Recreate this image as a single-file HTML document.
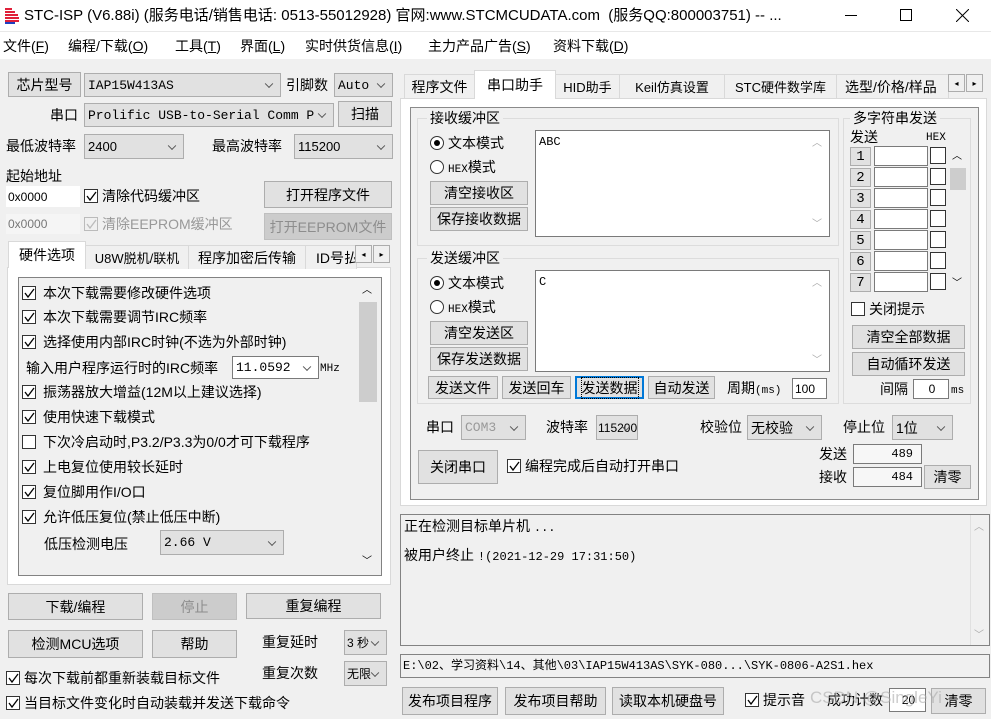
<!DOCTYPE html>
<html><head><meta charset="utf-8"><style>
*{margin:0;padding:0;box-sizing:border-box}
body{width:991px;height:719px;overflow:hidden;background:#f0f0f0;position:relative;font-family:"Liberation Sans","Noto Sans CJK SC",sans-serif;font-size:14px;color:#000}
div,span{position:absolute}
.t{white-space:nowrap;line-height:16px;font-size:14px}
.m{font-family:"Liberation Mono","Noto Sans CJK SC",monospace;font-size:12px}
.btn{background:#e1e1e1;border:1px solid #adadad;display:flex;align-items:center;justify-content:center;white-space:nowrap;font-size:14px}
.dis{background:#cccccc;border-color:#bfbfbf;color:#8d8d8d}
.cmb{background:#e1e1e1;border:1px solid #adadad;white-space:nowrap;padding-left:3px;display:flex;align-items:center;font-size:13px}
.cmb:after{content:"";position:absolute;right:8px;top:50%;width:5px;height:5px;border-right:1px solid #555;border-bottom:1px solid #555;transform:translateY(-70%) rotate(45deg)}
.wc{background:#fff;border-color:#7a7a7a}
.ed{background:#fff;border:1px solid #7a7a7a;white-space:nowrap;font-size:12px;padding-left:2px;display:flex;align-items:center}
.ck{width:14px;height:14px;border:1px solid #333;background:#fff}
.ck svg{position:absolute;left:0;top:0}
.rd{width:14px;height:14px;border:1px solid #333;border-radius:50%;background:#fff}
.grp{border:1px solid #dcdcdc}
.lbl{background:#f0f0f0;padding:0 3px;font-size:14px;line-height:16px;white-space:nowrap}
.tab{height:24px;border:1px solid #d9d9d9;border-bottom:none;background:#f0f0f0;font-size:14px;display:flex;align-items:center;justify-content:center;white-space:nowrap}
.arr{width:17px;height:18px;border:1px solid #adadad;background:#f0f0f0;font-size:8px;display:flex;align-items:center;justify-content:center}
</style></head><body>
<!-- title -->
<div style="left:0;top:0;width:991px;height:31px;background:#fff"></div>
<div style="left:0;top:31px;width:991px;height:28px;background:#fff;border-top:1px solid #e8e8e8"></div>
<svg style="position:absolute;left:3px;top:7px" width="20" height="18"><path d="M2 2h7M2 5h10M2 8h13M2 11h14M2 14h14" stroke="#e0203a" stroke-width="2"/><path d="M2 16h10" stroke="#2040c0" stroke-width="2"/></svg>
<div class="t" style="left:24px;top:7px;font-size:15px;line-height:18px">STC-ISP (V6.88i) (服务电话/销售电话: 0513-55012928) 官网:www.STCMCUDATA.com&nbsp; (服务QQ:800003751) -- ...</div>
<div style="left:845px;top:15px;width:12px;height:1px;background:#000"></div>
<div style="left:900px;top:9px;width:12px;height:12px;border:1px solid #000"></div>
<svg style="position:absolute;left:956px;top:9px" width="13" height="13"><path d="M0 0L13 13M13 0L0 13" stroke="#000"/></svg>
<div class="t" style="left:3px;top:38px">文件(<u>F</u>)</div>
<div class="t" style="left:68px;top:38px">编程/下载(<u>O</u>)</div>
<div class="t" style="left:175px;top:38px">工具(<u>T</u>)</div>
<div class="t" style="left:240px;top:38px">界面(<u>L</u>)</div>
<div class="t" style="left:305px;top:38px">实时供货信息(<u>I</u>)</div>
<div class="t" style="left:428px;top:38px">主力产品广告(<u>S</u>)</div>
<div class="t" style="left:553px;top:38px">资料下载(<u>D</u>)</div>

<!-- LEFT -->
<div class="btn" style="left:8px;top:72px;width:73px;height:25px">芯片型号</div>
<div class="cmb m" style="left:84px;top:73px;width:197px;height:24px">IAP15W413AS</div>
<div class="t" style="left:286px;top:77px">引脚数</div>
<div class="cmb m" style="left:334px;top:73px;width:59px;height:24px">Auto</div>
<div class="t" style="left:50px;top:107px">串口</div>
<div class="cmb m" style="left:84px;top:103px;width:250px;height:24px">Prolific USB-to-Serial Comm P</div>
<div class="btn" style="left:338px;top:101px;width:54px;height:26px">扫描</div>
<div class="t" style="left:6px;top:138px">最低波特率</div>
<div class="cmb" style="left:84px;top:134px;width:100px;height:25px">2400</div>
<div class="t" style="left:212px;top:138px">最高波特率</div>
<div class="cmb" style="left:294px;top:134px;width:99px;height:25px">115200</div>
<div class="t" style="left:6px;top:168px">起始地址</div>
<div class="ed" style="left:6px;top:186px;width:74px;height:21px;border:none">0x0000</div>
<div class="ck" style="left:84px;top:189px"><svg width="13" height="13"><path d="M2 6l3 4 6-8" fill="none" stroke="#000" stroke-width="1.3"/></svg></div>
<div class="t" style="left:102px;top:188px">清除代码缓冲区</div>
<div class="btn" style="left:264px;top:181px;width:128px;height:27px">打开程序文件</div>
<div class="ed" style="left:6px;top:214px;width:74px;height:20px;border:none;background:#f5f5f5;color:#777">0x0000</div>
<div class="ck" style="left:84px;top:217px;border-color:#bbb;background:#f0f0f0"><svg width="13" height="13"><path d="M2 6l3 4 6-8" fill="none" stroke="#bbb" stroke-width="1.3"/></svg></div>
<div class="t" style="left:102px;top:216px;color:#999">清除EEPROM缓冲区</div>
<div class="btn dis" style="left:264px;top:213px;width:128px;height:27px">打开EEPROM文件</div>
<!-- left tabs -->
<div style="left:7px;top:267px;width:384px;height:318px;background:#fff;border:1px solid #d9d9d9"></div>
<div class="tab" style="left:85px;top:245px;width:104px;font-size:13px">U8W脱机/联机</div>
<div class="tab" style="left:188px;top:245px;width:118px">程序加密后传输</div>
<div class="tab" style="left:305px;top:245px;width:52px;justify-content:flex-start;padding-left:10px;overflow:hidden">ID号払</div>
<div class="arr" style="left:355px;top:245px">◂</div><div class="arr" style="left:373px;top:245px">▸</div>
<div class="tab" style="left:8px;top:241px;width:78px;height:27px;background:#fff">硬件选项</div>
<div style="left:18px;top:277px;width:364px;height:299px;background:#f0f0f0;border:1px solid #828282"></div>
<div style="left:359px;top:302px;width:18px;height:100px;background:#cdcdcd"></div>
<div class="t" style="left:362px;top:283px;font-size:10px">︿</div>
<div class="t" style="left:362px;top:554px;font-size:10px">﹀</div>
<div class="t" style="left:26px;top:360px">输入用户程序运行时的IRC频率</div>
<div class="cmb m wc" style="left:232px;top:356px;width:87px;height:23px">11.0592</div>
<div class="t m" style="left:320px;top:361px;font-size:11px">MHz</div>
<div class="t" style="left:44px;top:536px">低压检测电压</div>
<div class="cmb m" style="left:160px;top:530px;width:124px;height:25px">2.66 V</div>
<!-- left buttons -->
<div class="btn" style="left:8px;top:593px;width:135px;height:27px">下载/编程</div>
<div class="btn dis" style="left:152px;top:593px;width:85px;height:27px">停止</div>
<div class="btn" style="left:246px;top:593px;width:135px;height:26px">重复编程</div>
<div class="btn" style="left:8px;top:630px;width:135px;height:28px">检测MCU选项</div>
<div class="btn" style="left:152px;top:630px;width:85px;height:28px">帮助</div>
<div class="t" style="left:262px;top:634px">重复延时</div>
<div class="cmb" style="left:344px;top:630px;width:43px;height:25px;font-size:12px;padding-left:2px">3 秒</div>
<div class="t" style="left:262px;top:665px">重复次数</div>
<div class="cmb" style="left:344px;top:661px;width:43px;height:25px;font-size:12px;padding-left:2px">无限</div>
<div class="ck" style="left:6px;top:671px"><svg width="13" height="13"><path d="M2 6l3 4 6-8" fill="none" stroke="#000" stroke-width="1.3"/></svg></div>
<div class="t" style="left:24px;top:670px">每次下载前都重新装载目标文件</div>
<div class="ck" style="left:6px;top:696px"><svg width="13" height="13"><path d="M2 6l3 4 6-8" fill="none" stroke="#000" stroke-width="1.3"/></svg></div>
<div class="t" style="left:24px;top:695px">当目标文件变化时自动装载并发送下载命令</div>

<!-- RIGHT tabs -->
<div style="left:400px;top:98px;width:587px;height:408px;background:#fff;border:1px solid #d9d9d9"></div>
<div class="tab" style="left:404px;top:74px;width:71px">程序文件</div>
<div class="tab" style="left:555px;top:74px;width:65px;font-size:13px">HID助手</div>
<div class="tab" style="left:619px;top:74px;width:106px;font-size:13px">Keil仿真设置</div>
<div class="tab" style="left:724px;top:74px;width:113px;font-size:13px">STC硬件数学库</div>
<div class="tab" style="left:836px;top:74px;width:113px;overflow:hidden;justify-content:flex-start;padding-left:8px">选型/价格/样品</div>
<div class="arr" style="left:948px;top:74px">◂</div><div class="arr" style="left:966px;top:74px">▸</div>
<div class="tab" style="left:474px;top:70px;width:82px;height:29px;background:#fff">串口助手</div>
<div style="left:410px;top:107px;width:569px;height:393px;background:#f0f0f0;border:1px solid #8a8a8a"></div>
<!-- receive group -->
<div class="grp" style="left:417px;top:118px;width:422px;height:128px"></div>
<div class="lbl" style="left:427px;top:110px">接收缓冲区</div>
<div class="rd" style="left:430px;top:136px"><div style="left:3px;top:3px;width:6px;height:6px;border-radius:50%;background:#000"></div></div>
<div class="t" style="left:448px;top:135px">文本模式</div>
<div class="rd" style="left:430px;top:160px"></div>
<div class="t" style="left:448px;top:159px"><span class="m" style="position:static;font-size:11px">HEX</span>模式</div>
<div class="btn" style="left:430px;top:181px;width:98px;height:24px">清空接收区</div>
<div class="btn" style="left:430px;top:207px;width:98px;height:24px">保存接收数据</div>
<div style="left:535px;top:130px;width:295px;height:107px;background:#fff;border:1px solid #7a7a7a"></div>
<div class="t m" style="left:539px;top:134px">ABC</div>
<div class="t" style="left:812px;top:136px;font-size:10px;color:#aaa">︿</div>
<div class="t" style="left:812px;top:217px;font-size:10px;color:#aaa">﹀</div>
<!-- send group -->
<div class="grp" style="left:417px;top:258px;width:422px;height:146px"></div>
<div class="lbl" style="left:427px;top:250px">发送缓冲区</div>
<div class="rd" style="left:430px;top:276px"><div style="left:3px;top:3px;width:6px;height:6px;border-radius:50%;background:#000"></div></div>
<div class="t" style="left:448px;top:275px">文本模式</div>
<div class="rd" style="left:430px;top:300px"></div>
<div class="t" style="left:448px;top:299px"><span class="m" style="position:static;font-size:11px">HEX</span>模式</div>
<div class="btn" style="left:430px;top:321px;width:98px;height:24px">清空发送区</div>
<div class="btn" style="left:430px;top:347px;width:98px;height:24px">保存发送数据</div>
<div style="left:535px;top:270px;width:295px;height:102px;background:#fff;border:1px solid #7a7a7a"></div>
<div class="t m" style="left:539px;top:274px">C</div>
<div class="t" style="left:812px;top:276px;font-size:10px;color:#aaa">︿</div>
<div class="t" style="left:812px;top:353px;font-size:10px;color:#aaa">﹀</div>
<div class="btn" style="left:428px;top:376px;width:70px;height:23px">发送文件</div>
<div class="btn" style="left:502px;top:376px;width:69px;height:23px">发送回车</div>
<div class="btn" style="left:575px;top:376px;width:69px;height:23px;border:2px solid #0078d7"><span style="position:static;outline:1px dotted #000">发送数据</span></div>
<div class="btn" style="left:648px;top:376px;width:67px;height:23px">自动发送</div>
<div class="t" style="left:727px;top:380px">周期<span class="m" style="position:static;font-size:11px">(ms)</span></div>
<div class="ed" style="left:792px;top:378px;width:35px;height:21px">100</div>
<!-- multi string -->
<div class="grp" style="left:843px;top:118px;width:128px;height:286px"></div>
<div class="lbl" style="left:850px;top:110px">多字符串发送</div>
<div class="t" style="left:850px;top:129px">发送</div>
<div class="t m" style="left:926px;top:130px;font-size:11px">HEX</div>
<div style="left:950px;top:168px;width:16px;height:22px;background:#cdcdcd"></div>
<div class="t" style="left:952px;top:149px;font-size:10px">︿</div>
<div class="t" style="left:952px;top:276px;font-size:10px">﹀</div>
<div class="ck" style="left:851px;top:302px"></div>
<div class="t" style="left:869px;top:301px">关闭提示</div>
<div class="btn" style="left:852px;top:325px;width:113px;height:24px">清空全部数据</div>
<div class="btn" style="left:852px;top:352px;width:113px;height:24px">自动循环发送</div>
<div class="t" style="left:880px;top:381px">间隔</div>
<div class="ed" style="left:913px;top:379px;width:36px;height:20px;justify-content:center">0</div>
<div class="t m" style="left:951px;top:383px;font-size:11px">ms</div>
<!-- port row -->
<div class="t" style="left:426px;top:419px">串口</div>
<div class="cmb m dis" style="left:461px;top:415px;width:65px;height:25px;color:#999">COM3</div>
<div class="t" style="left:546px;top:419px">波特率</div>
<div class="cmb" style="left:596px;top:415px;width:42px;height:25px;font-size:12px;padding-left:1px">115200</div>
<div class="t" style="left:700px;top:419px">校验位</div>
<div class="cmb" style="left:747px;top:415px;width:75px;height:25px;font-size:14px">无校验</div>
<div class="t" style="left:843px;top:419px">停止位</div>
<div class="cmb" style="left:892px;top:415px;width:61px;height:25px;font-size:14px">1位</div>
<div class="btn" style="left:418px;top:450px;width:80px;height:34px">关闭串口</div>
<div class="ck" style="left:507px;top:459px"><svg width="13" height="13"><path d="M2 6l3 4 6-8" fill="none" stroke="#000" stroke-width="1.3"/></svg></div>
<div class="t" style="left:525px;top:458px">编程完成后自动打开串口</div>
<div class="t" style="left:819px;top:446px">发送</div>
<div class="ed m" style="left:853px;top:444px;width:69px;height:20px;justify-content:flex-end;padding-right:8px;background:#f7f7f7">489</div>
<div class="t" style="left:819px;top:469px">接收</div>
<div class="ed m" style="left:853px;top:467px;width:69px;height:20px;justify-content:flex-end;padding-right:8px;background:#f7f7f7">484</div>
<div class="btn" style="left:924px;top:465px;width:47px;height:24px">清零</div>
<!-- log -->
<div style="left:400px;top:514px;width:590px;height:132px;border:1px solid #828282;background:#f0f0f0"></div>
<div class="t" style="left:404px;top:518px">正在检测目标单片机 <span class="m" style="position:static">...</span></div>
<div class="t" style="left:404px;top:547px">被用户终止 <span class="m" style="position:static">!(2021-12-29 17:31:50)</span></div>
<div style="left:970px;top:515px;width:1px;height:130px;background:#e0e0e0"></div>
<div class="t" style="left:974px;top:520px;font-size:10px;color:#aaa">︿</div>
<div class="t" style="left:974px;top:628px;font-size:10px;color:#aaa">﹀</div>
<div style="left:400px;top:654px;width:590px;height:24px;border:1px solid #828282;background:#f0f0f0"></div>
<div class="t m" style="left:403px;top:658px">E:\02、学习资料\14、其他\03\IAP15W413AS\SYK-080...\SYK-0806-A2S1.hex</div>
<div class="btn" style="left:402px;top:687px;width:96px;height:28px">发布项目程序</div>
<div class="btn" style="left:505px;top:687px;width:101px;height:28px">发布项目帮助</div>
<div class="btn" style="left:612px;top:687px;width:112px;height:28px">读取本机硬盘号</div>
<div class="ck" style="left:745px;top:693px"><svg width="13" height="13"><path d="M2 6l3 4 6-8" fill="none" stroke="#000" stroke-width="1.3"/></svg></div>
<div class="t" style="left:763px;top:692px">提示音</div>
<div class="t" style="left:827px;top:692px">成功计数</div>
<div class="ed" style="left:889px;top:688px;width:37px;height:24px;justify-content:center">20</div>
<div class="btn" style="left:931px;top:688px;width:55px;height:26px">清零</div>
<div class="t" style="left:810px;top:688px;font-size:17px;line-height:20px;color:rgba(170,170,170,.6)">CSDN @SingleYi</div>

<!-- left checkbox list -->
<div class="ck" style="left:22px;top:286px"><svg width="13" height="13"><path d="M2 6l3 4 6-8" fill="none" stroke="#000" stroke-width="1.3"/></svg></div><div class="t" style="left:43px;top:285px">本次下载需要修改硬件选项</div>
<div class="ck" style="left:22px;top:310px"><svg width="13" height="13"><path d="M2 6l3 4 6-8" fill="none" stroke="#000" stroke-width="1.3"/></svg></div><div class="t" style="left:43px;top:309px">本次下载需要调节IRC频率</div>
<div class="ck" style="left:22px;top:335px"><svg width="13" height="13"><path d="M2 6l3 4 6-8" fill="none" stroke="#000" stroke-width="1.3"/></svg></div><div class="t" style="left:43px;top:334px">选择使用内部IRC时钟(不选为外部时钟)</div>
<div class="ck" style="left:22px;top:385px"><svg width="13" height="13"><path d="M2 6l3 4 6-8" fill="none" stroke="#000" stroke-width="1.3"/></svg></div><div class="t" style="left:43px;top:384px">振荡器放大增益(12M以上建议选择)</div>
<div class="ck" style="left:22px;top:410px"><svg width="13" height="13"><path d="M2 6l3 4 6-8" fill="none" stroke="#000" stroke-width="1.3"/></svg></div><div class="t" style="left:43px;top:409px">使用快速下载模式</div>
<div class="ck" style="left:22px;top:435px"></div><div class="t" style="left:43px;top:434px">下次冷启动时,P3.2/P3.3为0/0才可下载程序</div>
<div class="ck" style="left:22px;top:460px"><svg width="13" height="13"><path d="M2 6l3 4 6-8" fill="none" stroke="#000" stroke-width="1.3"/></svg></div><div class="t" style="left:43px;top:459px">上电复位使用较长延时</div>
<div class="ck" style="left:22px;top:485px"><svg width="13" height="13"><path d="M2 6l3 4 6-8" fill="none" stroke="#000" stroke-width="1.3"/></svg></div><div class="t" style="left:43px;top:484px">复位脚用作I/O口</div>
<div class="ck" style="left:22px;top:510px"><svg width="13" height="13"><path d="M2 6l3 4 6-8" fill="none" stroke="#000" stroke-width="1.3"/></svg></div><div class="t" style="left:43px;top:509px">允许低压复位(禁止低压中断)</div>

<!-- multi rows -->
<div class="btn m" style="left:850px;top:147px;width:21px;height:19px">1</div><div class="ed" style="left:874px;top:146px;width:54px;height:20px"></div><div class="ck" style="left:930px;top:147px;width:16px;height:17px"></div>
<div class="btn m" style="left:850px;top:168px;width:21px;height:19px">2</div><div class="ed" style="left:874px;top:167px;width:54px;height:20px"></div><div class="ck" style="left:930px;top:168px;width:16px;height:17px"></div>
<div class="btn m" style="left:850px;top:189px;width:21px;height:19px">3</div><div class="ed" style="left:874px;top:188px;width:54px;height:20px"></div><div class="ck" style="left:930px;top:189px;width:16px;height:17px"></div>
<div class="btn m" style="left:850px;top:210px;width:21px;height:19px">4</div><div class="ed" style="left:874px;top:209px;width:54px;height:20px"></div><div class="ck" style="left:930px;top:210px;width:16px;height:17px"></div>
<div class="btn m" style="left:850px;top:231px;width:21px;height:19px">5</div><div class="ed" style="left:874px;top:230px;width:54px;height:20px"></div><div class="ck" style="left:930px;top:231px;width:16px;height:17px"></div>
<div class="btn m" style="left:850px;top:252px;width:21px;height:19px">6</div><div class="ed" style="left:874px;top:251px;width:54px;height:20px"></div><div class="ck" style="left:930px;top:252px;width:16px;height:17px"></div>
<div class="btn m" style="left:850px;top:273px;width:21px;height:19px">7</div><div class="ed" style="left:874px;top:272px;width:54px;height:20px"></div><div class="ck" style="left:930px;top:273px;width:16px;height:17px"></div>
</body></html>
